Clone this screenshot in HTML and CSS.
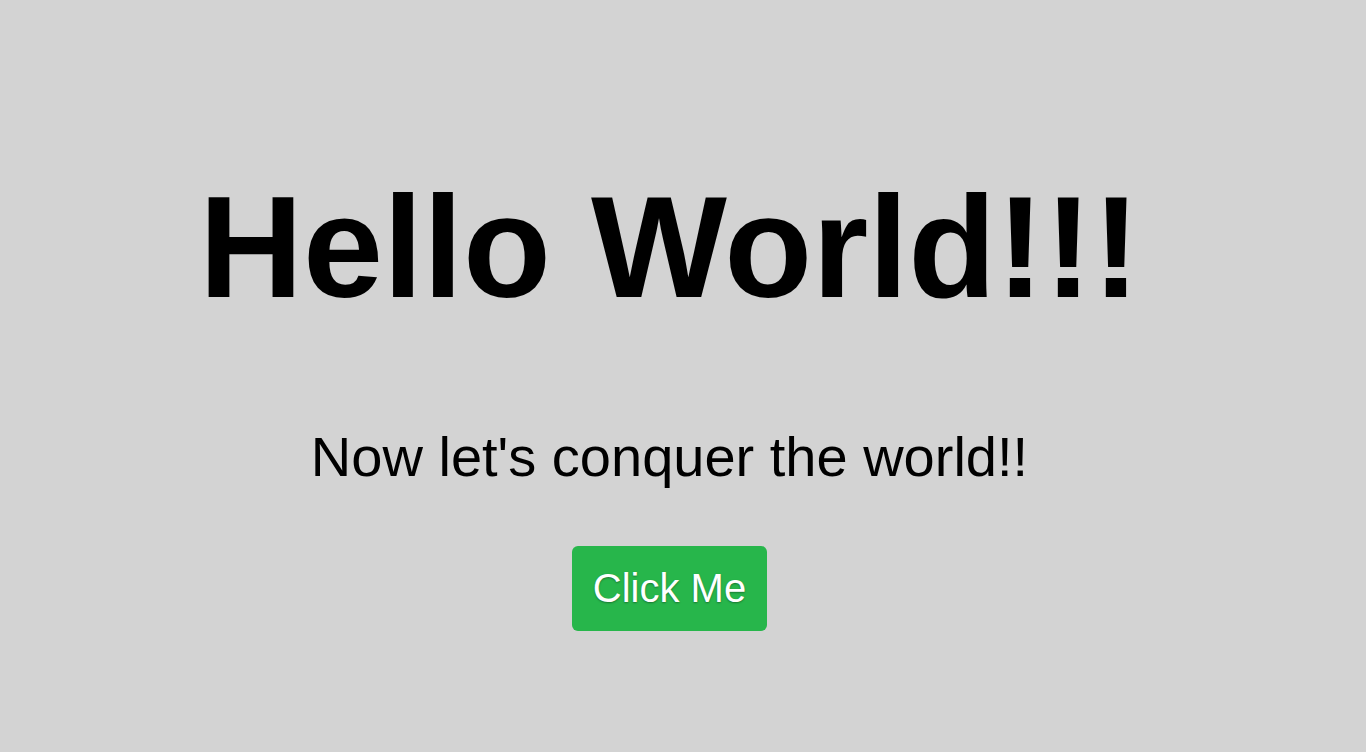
FILE: index.html
```html
<!DOCTYPE html>
<html lang="en">
<head>
<meta charset="utf-8">
<title>Hello World</title>
<link rel="stylesheet" href="styles.css">
</head>
<body>
<main class="page">
  <h1 class="title">Hello World!!!</h1>
  <p class="subtitle">Now let's conquer the world!!</p>
  <button class="btn" type="button">Click Me</button>
</main>
</body>
</html>
```
FILE: styles.css
```css
html, body {
  margin: 0;
  padding: 0;
}
body {
  background: #d3d3d3;
  font-family: "Liberation Sans", Arial, sans-serif;
  color: #000;
}
.page {
  display: flex;
  flex-direction: column;
  align-items: center;
  text-align: center;
  padding: 165px 27px 0 0;
}
.title {
  margin: 0 0 93px;
  font-size: 144px;
  font-weight: bold;
  line-height: normal;
}
.subtitle {
  margin: 0 0 57px;
  font-size: 56px;
  line-height: normal;
}
.btn {
  font-family: "Liberation Sans", Arial, sans-serif;
  font-size: 40px;
  line-height: normal;
  color: #fff;
  background: #27b64b;
  border: none;
  border-radius: 6px;
  padding: 20px 21px;
  text-shadow: 0 1px 2px rgba(0, 0, 0, 0.35);
  cursor: pointer;
}
```
